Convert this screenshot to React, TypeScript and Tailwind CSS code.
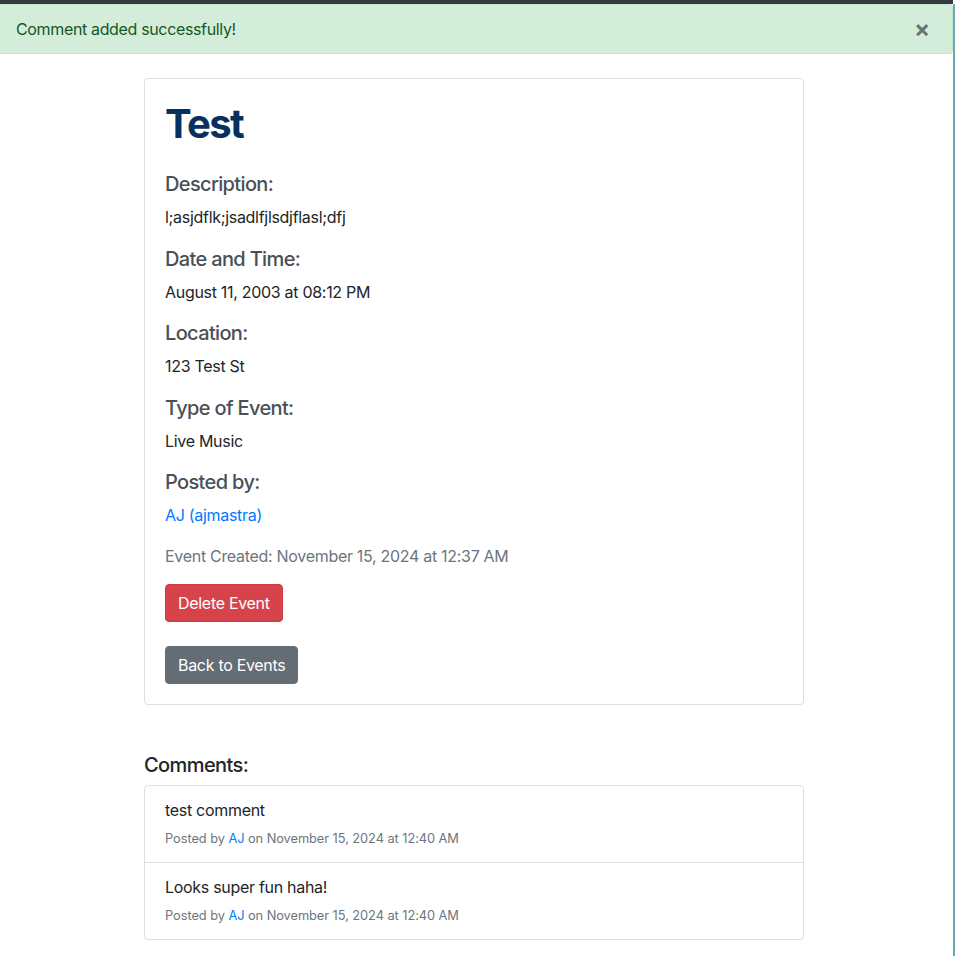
import React from "react";

const fields = [
  { label: "Description:", value: "l;asjdflk;jsadlfjlsdjflasl;dfj" },
  { label: "Date and Time:", value: "August 11, 2003 at 08:12 PM" },
  { label: "Location:", value: "123 Test St" },
  { label: "Type of Event:", value: "Live Music" },
];

const comments = [
  { text: "test comment", author: "AJ", date: "November 15, 2024 at 12:40 AM" },
  { text: "Looks super fun haha!", author: "AJ", date: "November 15, 2024 at 12:40 AM" },
];

export default function App() {
  return (
    <div className="flex min-h-[956px] bg-white font-['Inter',sans-serif] text-[#212529] tracking-[-0.3px]">
      <div className="flex-1 flex flex-col">
        <div className="h-[4px] bg-[#343a40]" />

        {/* flash message */}
        <div className="flex items-center justify-between h-[50px] pl-[16px] pr-[22px] bg-[#d4edda] border border-l-0 border-[#c3e6cb] rounded-r-[4px] text-[#155724] text-[16px] tracking-[-0.35px]">
          <span>Comment added successfully!</span>
          <span className="text-[24px] font-bold leading-none text-black/50">×</span>
        </div>

        <div className="ml-[144px] w-[660px] pt-[24px]">
          {/* event card */}
          <div className="border border-[#dfdfdf] rounded-[4px] p-[20px]">
            <h1 className="text-[40px] leading-[48px] font-bold text-[#06305e] mb-[24px] tracking-[-1.6px] mt-[1px]">Test</h1>
            {fields.map((f) => (
              <div key={f.label}>
                <h5 className="text-[20px] leading-[25px] font-medium text-[#495057] mb-[8px] tracking-[-0.65px]">{f.label}</h5>
                <p className="text-[16px] leading-[24px] mb-[17.5px]">{f.value}</p>
              </div>
            ))}
            <h5 className="text-[20px] leading-[25px] font-medium text-[#495057] mb-[8px] tracking-[-0.65px]">Posted by:</h5>
            <p className="text-[16px] leading-[24px] mb-[17px]">
              <a className="text-[#007bff]">AJ (ajmastra)</a>
            </p>
            <p className="text-[16px] leading-[24px] text-[#6c757d] mb-[16px]">Event Created: November 15, 2024 at 12:37 AM</p>
            <button className="h-[38px] px-[12px] rounded-[4px] bg-[#d6434b] border border-[#d13a42] text-white text-[16px] block">Delete Event</button>
            <button className="h-[38px] px-[12px] mt-[24px] rounded-[4px] bg-[#646c74] border border-[#646c74] text-white text-[16px] block">Back to Events</button>
          </div>

          {/* comments */}
          <h5 className="text-[20px] leading-[24px] font-medium mt-[48px] mb-[8px] tracking-[-0.6px]">Comments:</h5>
          <div className="border border-[#dfdfdf] rounded-[4px]">
            {comments.map((c, i) => (
              <div key={i} className={`px-[20px] pt-[12px] pb-[13px] ${i > 0 ? "border-t border-[#dfdfdf]" : ""}`}>
                <p className="text-[16px] leading-[24px] mb-[7px]">{c.text}</p>
                <p className="text-[12.8px] leading-[20px] text-[#6c757d] tracking-[-0.05px]">
                  Posted by <a className="text-[#007bff]">{c.author}</a> on {c.date}
                </p>
              </div>
            ))}
          </div>
        </div>
      </div>
      <div className="w-[2px] mt-[4px] bg-[#6aa8b6]" />
    </div>
  );
}
